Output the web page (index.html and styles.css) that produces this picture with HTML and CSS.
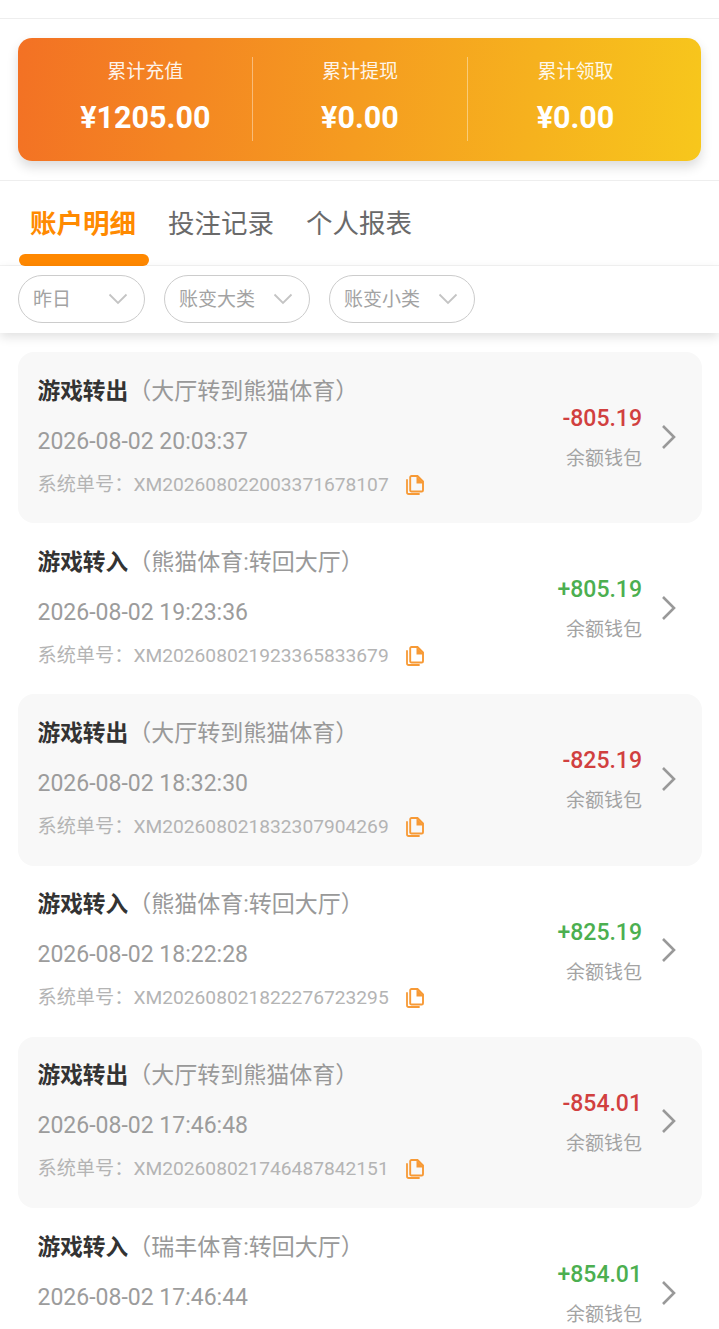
FILE: index.html
```html
<!DOCTYPE html>
<html lang="zh-CN">
<head>
  <meta charset="UTF-8" />
  <meta name="viewport" content="width=device-width, initial-scale=1" />
  <title>账户明细</title>
  <link rel="stylesheet" href="styles.css">
</head>
<body>
  <svg class="defs" width="0" height="0">
    <symbol id="copy" viewBox="0 0 18 20">
      <path d="M1 5V17.200c0 1 .7 1.800 1.800 1.800H13" fill="none" stroke="currentColor" stroke-width="1.800" stroke-linecap="round"/>
      <path d="M5.500 1h6L17 6.500v8.700c0 .8-.6 1.300-1.300 1.300H5.500c-.8 0-1.300-.5-1.300-1.300V2.300C4.200 1.500 4.700 1 5.500 1z" fill="none" stroke="currentColor" stroke-width="1.900"/>
      <path d="M10.500 1l6.500 6.500v1h-6.500z" fill="currentColor"/>
    </symbol>
    <symbol id="chev" viewBox="0 0 16 26">
      <path d="M2 2l11 11L2 24" fill="none" stroke="currentColor" stroke-width="2.600"/>
    </symbol>
    <symbol id="down" viewBox="0 0 20 12">
      <path d="M1.500 1.500L10 10l8.500-8.500" fill="none" stroke="currentColor" stroke-width="1.800"/>
    </symbol>
  </svg>

  <div class="topbar"></div>

  <section class="summary">
    <div class="card">
      <div class="stat"><div class="stat-label">累计充值</div><div class="stat-num">¥1205.00</div></div>
      <div class="stat"><div class="stat-label">累计提现</div><div class="stat-num">¥0.00</div></div>
      <div class="stat"><div class="stat-label">累计领取</div><div class="stat-num">¥0.00</div></div>
    </div>
  </section>

  <nav class="tabs">
    <a class="tab active">账户明细</a>
    <a class="tab">投注记录</a>
    <a class="tab">个人报表</a>
  </nav>

  <div class="filters">
    <div class="pill pill-short"><span>昨日</span><svg class="pill-arrow"><use href="#down"/></svg></div>
    <div class="pill"><span>账变大类</span><svg class="pill-arrow"><use href="#down"/></svg></div>
    <div class="pill"><span>账变小类</span><svg class="pill-arrow"><use href="#down"/></svg></div>
  </div>

  <main class="list">
    <div class="row shaded">
      <div class="info">
        <div class="title"><b>游戏转出</b><span>（大厅转到熊猫体育）</span></div>
        <div class="time">2026-08-02 20:03:37</div>
        <div class="order">系统单号：XM202608022003371678107<svg class="copy"><use href="#copy"/></svg></div>
      </div>
      <div class="side"><div class="amount minus">-805.19</div><div class="wallet">余额钱包</div></div>
      <svg class="chev"><use href="#chev"/></svg>
    </div>
    <div class="row">
      <div class="info">
        <div class="title"><b>游戏转入</b><span>（熊猫体育:转回大厅）</span></div>
        <div class="time">2026-08-02 19:23:36</div>
        <div class="order">系统单号：XM202608021923365833679<svg class="copy"><use href="#copy"/></svg></div>
      </div>
      <div class="side"><div class="amount plus">+805.19</div><div class="wallet">余额钱包</div></div>
      <svg class="chev"><use href="#chev"/></svg>
    </div>
    <div class="row shaded">
      <div class="info">
        <div class="title"><b>游戏转出</b><span>（大厅转到熊猫体育）</span></div>
        <div class="time">2026-08-02 18:32:30</div>
        <div class="order">系统单号：XM202608021832307904269<svg class="copy"><use href="#copy"/></svg></div>
      </div>
      <div class="side"><div class="amount minus">-825.19</div><div class="wallet">余额钱包</div></div>
      <svg class="chev"><use href="#chev"/></svg>
    </div>
    <div class="row">
      <div class="info">
        <div class="title"><b>游戏转入</b><span>（熊猫体育:转回大厅）</span></div>
        <div class="time">2026-08-02 18:22:28</div>
        <div class="order">系统单号：XM202608021822276723295<svg class="copy"><use href="#copy"/></svg></div>
      </div>
      <div class="side"><div class="amount plus">+825.19</div><div class="wallet">余额钱包</div></div>
      <svg class="chev"><use href="#chev"/></svg>
    </div>
    <div class="row shaded">
      <div class="info">
        <div class="title"><b>游戏转出</b><span>（大厅转到熊猫体育）</span></div>
        <div class="time">2026-08-02 17:46:48</div>
        <div class="order">系统单号：XM202608021746487842151<svg class="copy"><use href="#copy"/></svg></div>
      </div>
      <div class="side"><div class="amount minus">-854.01</div><div class="wallet">余额钱包</div></div>
      <svg class="chev"><use href="#chev"/></svg>
    </div>
    <div class="row">
      <div class="info">
        <div class="title"><b>游戏转入</b><span>（瑞丰体育:转回大厅）</span></div>
        <div class="time">2026-08-02 17:46:44</div>
        <div class="order"></div>
      </div>
      <div class="side"><div class="amount plus">+854.01</div><div class="wallet">余额钱包</div></div>
      <svg class="chev"><use href="#chev"/></svg>
    </div>
  </main>
</body>
</html>
```
FILE: styles.css
```css
* { box-sizing: border-box; }
html, body { height: 100%; overflow: hidden; }
body { margin: 0; background: #fff; font-family: Roboto, "Noto Sans CJK SC", sans-serif; color: #999; }
.defs { position: absolute; }

.topbar { height: 19px; border-bottom: 1px solid #eee; }

.summary { height: 162px; padding: 19px 18px 0; border-bottom: 1px solid #eee; }
.card { display: flex; height: 123px; padding: 19px 18px 20px; border-radius: 14px; background: linear-gradient(97deg, #f37124, #f7c71c); box-shadow: 0 6px 12px rgba(0,0,0,0.14); }
.stat { flex: 0 0 215.600px; text-align: center; color: #fff; border-left: 1px solid rgba(255,255,255,0.4); }
.stat:first-child { border-left: 0; padding-left: 3px; }
.stat-label { font-size: 19px; line-height: 30px; opacity: 0.9; }
.stat-num { margin-top: 12px; font-size: 30.500px; line-height: 38px; font-weight: 700; }

.tabs { display: flex; height: 85px; padding: 0 30px; gap: 32px; border-bottom: 1px solid #f4f4f4; }
.tab { position: relative; width: 106px; font-size: 26.500px; line-height: 85px; color: #6a6a6a; white-space: nowrap; }
.tab.active { font-weight: 700; color: #ff8a00; }
.tab.active::after { content: ""; position: absolute; left: -11px; bottom: -1px; width: 130px; height: 12px; border-radius: 6px; background: #ff8800; }

.filters { position: relative; display: flex; gap: 19px; height: 67px; padding: 9px 18px 0; background: #fff; box-shadow: 0 4px 10px rgba(0,0,0,0.12); }
.pill { display: flex; align-items: center; justify-content: space-between; width: 146px; height: 48px; padding: 0 16px 0 14px; border: 1px solid #ccc; border-radius: 24px; font-size: 19px; color: #a3a3a3; }
.pill span { margin-bottom: 3px; }
.pill-short { width: 127px; }
.pill-arrow { width: 20px; height: 12px; color: #c4c4c4; }

.list { padding: 19px 17px 0 18px; }
.row { display: flex; align-items: center; height: 171.200px; padding: 0 25px 0 19.500px; border-radius: 16px; }
.row.shaded { background: #f8f8f8; }
.info { flex: 1; min-width: 0; margin-top: -1px; }
.title { font-size: 22.700px; line-height: 32px; color: #999; white-space: nowrap; }
.title b { color: #333; }
.title span { font-size: 23px; }
.time { margin-top: 18px; font-size: 23px; line-height: 32px; color: #9c9c9c; }
.order { display: flex; align-items: center; height: 28px; margin-top: 13px; font-size: 19.200px; line-height: 28px; color: #b4b4b4; white-space: nowrap; }
.copy { width: 18px; height: 20px; margin-left: 17px; color: #f79a36; }
.side { text-align: right; margin-right: 19px; margin-top: 2px; }
.amount { font-size: 23px; line-height: 30px; font-weight: 500; }
.amount.minus { color: #d1403f; }
.amount.plus { color: #4caf50; }
.wallet { margin-top: 11px; font-size: 19px; line-height: 28px; color: #a3a3a3; }
.chev { width: 16px; height: 26px; color: #999; margin-top: -2px; }
```
